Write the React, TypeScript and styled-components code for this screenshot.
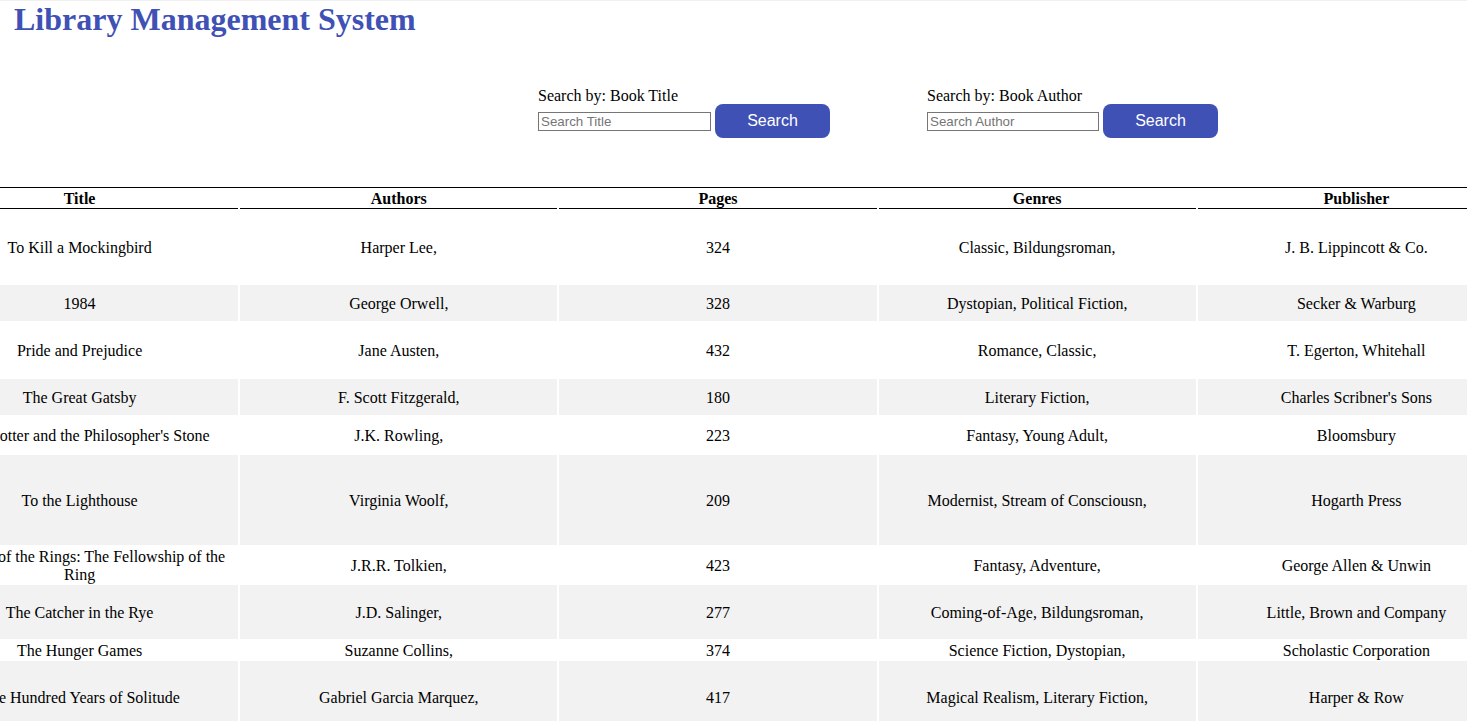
import React from "react";
import styled, { createGlobalStyle } from "styled-components";

const GlobalStyle = createGlobalStyle`
  html, body {
    margin: 0;
    padding: 0;
    background: #ffffff;
    overflow-x: hidden;
  }
  body {
    font-family: "Liberation Serif", "Times New Roman", serif;
    font-size: 16px;
    color: #000000;
  }
`;

const Page = styled.div`
  border-top: 1px solid #f0f0f0;
  overflow: hidden;
`;

const Heading = styled.h1`
  margin: 0;
  padding-left: 14px;
  font-family: "Liberation Serif", "Times New Roman", serif;
  font-size: 32px;
  font-weight: bold;
  line-height: 37px;
  color: #3f51b5;
`;

const SearchBar = styled.div`
  display: flex;
  gap: 97px;
  margin-top: 48px;
  padding-left: 538px;
`;

const SearchGroup = styled.div`
  display: flex;
  flex-direction: column;
`;

const SearchLabel = styled.label`
  display: block;
  font-size: 16px;
  line-height: 20px;
  height: 18px;
`;

const SearchRow = styled.div`
  display: flex;
  align-items: center;
  gap: 4px;
`;

const SearchInput = styled.input<{ $w: number }>`
  box-sizing: border-box;
  width: ${(p) => p.$w}px;
  height: 19px;
  padding: 0 2px;
  border: 1px solid #767676;
  border-radius: 0;
  font-family: "Liberation Sans", Arial, sans-serif;
  font-size: 13.33px;
  color: #000;
  outline: none;
  &::placeholder {
    color: #757575;
  }
`;

const SearchButton = styled.button`
  width: 115px;
  height: 34px;
  border: none;
  border-radius: 8px;
  background: #3f51b5;
  color: #ffffff;
  font-family: "Liberation Sans", Arial, sans-serif;
  font-size: 16px;
  cursor: pointer;
  padding: 0;
`;

const Table = styled.table`
  margin-top: 49px;
  margin-left: -81px;
  width: 1598px;
  table-layout: fixed;
  border-collapse: separate;
  border-spacing: 2px;
  border-top: 1px solid #000000;
`;

const HeadCell = styled.th`
  padding: 0;
  height: 18px;
  line-height: 18px;
  font-size: 16px;
  font-weight: bold;
  text-align: center;
  border-bottom: 1px solid #000000;
`;

const Row = styled.tr`
  &:nth-child(even) td {
    background: #f2f2f2;
  }
`;

const Cell = styled.td`
  padding: 0;
  font-size: 16px;
  text-align: center;
  vertical-align: middle;
  background: #ffffff;
`;

const CellText = styled.div`
  line-height: 18px;
  margin-top: 1px;
  margin-bottom: -1px;
`;

type Book = {
  title: string;
  authors: string;
  pages: number;
  genres: string;
  publisher: string;
  h: number;
};

const books: Book[] = [
  { title: "To Kill a Mockingbird", authors: "Harper Lee,", pages: 324, genres: "Classic, Bildungsroman,", publisher: "J. B. Lippincott & Co.", h: 72 },
  { title: "1984", authors: "George Orwell,", pages: 328, genres: "Dystopian, Political Fiction,", publisher: "Secker & Warburg", h: 36 },
  { title: "Pride and Prejudice", authors: "Jane Austen,", pages: 432, genres: "Romance, Classic,", publisher: "T. Egerton, Whitehall", h: 54 },
  { title: "The Great Gatsby", authors: "F. Scott Fitzgerald,", pages: 180, genres: "Literary Fiction,", publisher: "Charles Scribner's Sons", h: 36 },
  { title: "Harry Potter and the Philosopher's Stone", authors: "J.K. Rowling,", pages: 223, genres: "Fantasy, Young Adult,", publisher: "Bloomsbury", h: 36 },
  { title: "To the Lighthouse", authors: "Virginia Woolf,", pages: 209, genres: "Modernist, Stream of Consciousn,", publisher: "Hogarth Press", h: 90 },
  { title: "The Lord of the Rings: The Fellowship of the Ring", authors: "J.R.R. Tolkien,", pages: 423, genres: "Fantasy, Adventure,", publisher: "George Allen & Unwin", h: 36 },
  { title: "The Catcher in the Rye", authors: "J.D. Salinger,", pages: 277, genres: "Coming-of-Age, Bildungsroman,", publisher: "Little, Brown and Company", h: 54 },
  { title: "The Hunger Games", authors: "Suzanne Collins,", pages: 374, genres: "Science Fiction, Dystopian,", publisher: "Scholastic Corporation", h: 18 },
  { title: "One Hundred Years of Solitude", authors: "Gabriel Garcia Marquez,", pages: 417, genres: "Magical Realism, Literary Fiction,", publisher: "Harper & Row", h: 72 },
];

export default function App() {
  return (
    <>
      <GlobalStyle />
      <Page>
        <Heading>Library Management System</Heading>
        <SearchBar>
          <SearchGroup>
            <SearchLabel>Search by: Book Title</SearchLabel>
            <SearchRow>
              <SearchInput $w={173} placeholder="Search Title" />
              <SearchButton>Search</SearchButton>
            </SearchRow>
          </SearchGroup>
          <SearchGroup>
            <SearchLabel>Search by: Book Author</SearchLabel>
            <SearchRow>
              <SearchInput $w={172} placeholder="Search Author" />
              <SearchButton>Search</SearchButton>
            </SearchRow>
          </SearchGroup>
        </SearchBar>
        <Table>
          <thead>
            <tr>
              <HeadCell>Title</HeadCell>
              <HeadCell>Authors</HeadCell>
              <HeadCell>Pages</HeadCell>
              <HeadCell>Genres</HeadCell>
              <HeadCell>Publisher</HeadCell>
            </tr>
          </thead>
          <tbody>
            {books.map((b) => (
              <Row key={b.title} style={{ height: b.h }}>
                <Cell><CellText>{b.title}</CellText></Cell>
                <Cell><CellText>{b.authors}</CellText></Cell>
                <Cell><CellText>{b.pages}</CellText></Cell>
                <Cell><CellText>{b.genres}</CellText></Cell>
                <Cell><CellText>{b.publisher}</CellText></Cell>
              </Row>
            ))}
          </tbody>
        </Table>
      </Page>
    </>
  );
}
